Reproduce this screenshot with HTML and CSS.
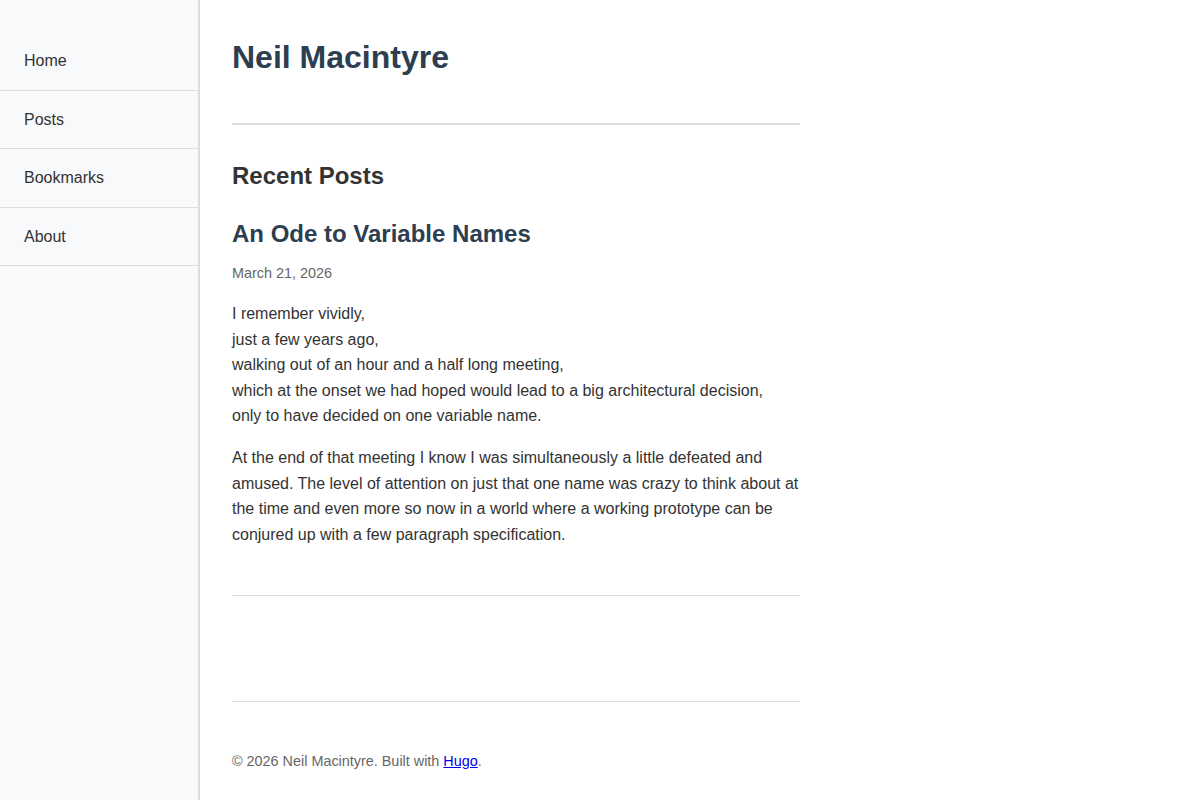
FILE: index.html
```html
<!DOCTYPE html>
<html lang="en">

<head>
    <meta charset="UTF-8">
    <meta name="viewport" content="width=device-width, initial-scale=1.0">
    <title>Neil Macintyre</title>
    <link rel="stylesheet" href="styles.css">
</head>

<body>
    <nav class="sidebar">
        <ul class="nav-list">
            <li><a href="#">Home</a></li>
            <li><a href="#">Posts</a></li>
            <li><a href="#">Bookmarks</a></li>
            <li><a href="#">About</a></li>
        </ul>
    </nav>

    <div class="main">
        <header class="site-header">
            <h1>Neil Macintyre</h1>
        </header>

        <section class="recent">
            <h2>Recent Posts</h2>

            <article class="post">
                <h3><a href="#">An Ode to Variable Names</a></h3>
                <div class="post-date">March 21, 2026</div>
                <p>I remember vividly,<br />
                    just a few years ago,<br />
                    walking out of an hour and a half long meeting,<br />
                    which at the onset we had hoped would lead to a big architectural decision,<br />
                    only to have decided on one variable name.</p>
                <p>At the end of that meeting I know I was simultaneously a little defeated and amused. The level of attention on just that one name was crazy to think about at the time and even more so now in a world where a working prototype can be conjured up with a few paragraph specification.</p>
            </article>
        </section>

        <footer class="site-footer">
            <p>&copy; 2026 Neil Macintyre. Built with <a href="#">Hugo</a>.</p>
        </footer>
    </div>
</body>

</html>
```

FILE: styles.css
```css
body {
    margin: 0;
    font-family: "Liberation Sans", Arial, sans-serif;
    font-size: 16px;
    line-height: 1.6;
    color: #333;
    background: #fff;
}

/* left navigation */
.sidebar {
    position: fixed;
    top: 0;
    left: 0;
    bottom: 0;
    width: 198px;
    background: #f8f9fa;
    border-right: 2px solid #ddd;
    padding-top: 2rem;
}

.nav-list {
    list-style: none;
    margin: 0;
    padding: 0;
}

.nav-list li {
    border-bottom: 1px solid #ddd;
}

.nav-list a {
    display: block;
    padding: 1rem 1.5rem;
    color: #333;
    text-decoration: none;
}

/* content column */
.main {
    margin-left: 200px;
    padding: 2rem;
    max-width: 568px;
}

.site-header {
    padding-bottom: 40px;
    border-bottom: 2px solid #ddd;
    margin-bottom: 2rem;
}

.site-header h1 {
    margin: 0;
    font-size: 2rem;
    color: #2c3e50;
}

.recent h2 {
    margin: 0 0 19px;
    font-size: 1.5rem;
    color: #333;
}

.post {
    padding-bottom: 2rem;
    border-bottom: 1px solid #ddd;
}

.post h3 {
    margin: 0 0 9px;
    font-size: 1.5rem;
}

.post h3 a {
    color: #2c3e50;
    text-decoration: none;
}

.post-date {
    font-size: 0.9rem;
    color: #666;
    margin-bottom: 16px;
}

.post p {
    margin: 0 0 16px;
}

.site-footer {
    margin-top: 105px;
    border-top: 1px solid #ddd;
    padding-top: 33px;
    font-size: 0.9rem;
    color: #666;
}

.site-footer a {
    color: #0000ee;
}
```
